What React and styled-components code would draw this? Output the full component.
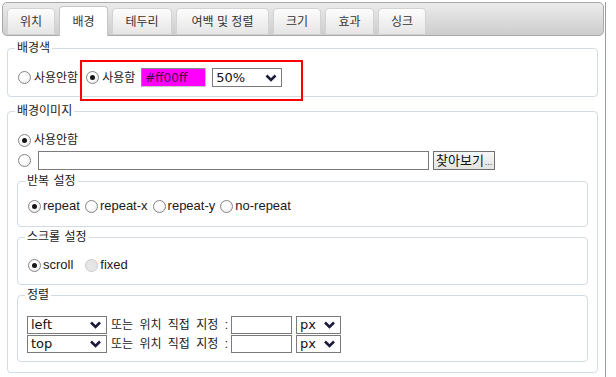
import React from 'react';
import styled, { createGlobalStyle } from 'styled-components';

const Global = createGlobalStyle`
  html, body { margin: 0; padding: 0; background: #fff; }
  body {
    font-family: "Liberation Sans", "Noto Sans CJK KR", sans-serif;
    font-size: 12px;
    line-height: 16px;
    color: #1a1a1a;
  }
  * { box-sizing: border-box; }
`;

const Frame = styled.div`
  box-sizing: content-box;
  width: 605px;
  min-height: 377px;
  border-right: 1px solid #9d9d9d;
`;

const TabBar = styled.div`
  width: 602px;
  height: 34px;
  margin: 2px 0 0 2px;
  padding-left: 4px;
  display: flex;
  align-items: flex-end;
  gap: 4px;
  border: 1px solid #a9a9a9;
  border-radius: 5px;
  background: linear-gradient(#ebebeb, #cdcdcd);
`;

const Tab = styled.div`
  width: ${(p) => p.$w}px;
  height: ${(p) => (p.$active ? 30 : 27)}px;
  margin-bottom: ${(p) => (p.$active ? -1 : 0)}px;
  display: flex;
  align-items: center;
  justify-content: center;
  border: 1px solid ${(p) => (p.$active ? '#c6c6c6' : '#d2d2d2')};
  border-bottom: ${(p) => (p.$active ? 'none' : '1px solid #d2d2d2')};
  border-radius: 4px 4px 0 0;
  background: ${(p) => (p.$active ? '#fff' : 'linear-gradient(#fdfdfd, #e5e5e5)')};
  font-size: 12px;
  color: #333;
  position: relative;
  padding-top: ${(p) => (p.$active ? 0 : 1)}px;
`;

const Content = styled.div`
  padding: 5px 7px 0 7px;
`;

const Group = styled.fieldset`
  margin: ${(p) => p.$mt || 0}px 0 0;
  padding: ${(p) => p.$pt}px 9px ${(p) => p.$pb}px;
  border: 1px solid #d3dbe3;
  border-radius: 4px;
  min-width: 0;
`;

const Legend = styled.legend`
  padding: 0 2px;
  margin-left: -2px;
  font-size: 12px;
  line-height: 15px;
  word-spacing: 1px;
  color: #1a1a1a;
`;

const Row = styled.div`
  display: flex;
  align-items: center;
  height: ${(p) => p.$h || 16}px;
  margin-top: ${(p) => p.$mt || 0}px;
`;

const Option = styled.label`
  display: inline-flex;
  align-items: center;
  gap: ${(p) => (p.$gap != null ? p.$gap : 3)}px;
  margin-left: ${(p) => p.$ml || 0}px;
  margin-right: ${(p) => p.$mr || 0}px;
  white-space: nowrap;
  font-size: ${(p) => p.$fs || 12}px;
  color: #1a1a1a;
`;

const Radio = styled.span`
  width: 13px;
  height: 13px;
  flex: none;
  border-radius: 50%;
  border: 1px solid ${(p) => (p.$disabled ? '#c9c9c9' : '#858585')};
  background: ${(p) =>
    p.$disabled ? '#e6e6e6' : 'radial-gradient(circle at 40% 35%, #ffffff 30%, #e6e6e6)'};
  display: inline-flex;
  align-items: center;
  justify-content: center;
  &::after {
    content: '';
    width: 5px;
    height: 5px;
    border-radius: 50%;
    background: #151515;
    display: ${(p) => (p.$checked ? 'block' : 'none')};
  }
`;

const Highlight = styled.span`
  position: relative;
  display: inline-flex;
  align-items: center;
  gap: 6px;
  &::after {
    content: '';
    position: absolute;
    top: -8px;
    bottom: -14px;
    left: -6px;
    right: -21px;
    border: 2px solid #f00;
    pointer-events: none;
  }
`;

const ColorBox = styled.div`
  width: 65px;
  height: 19px;
  background: #ff00ff;
  border: 1px solid #8a8a8a;
  border-right-color: #c9c9c9;
  border-bottom-color: #c9c9c9;
  padding: 0 0 0 3px;
  display: flex;
  align-items: center;
  font-family: "DejaVu Sans", sans-serif;
  font-size: 12px;
  color: #4a0850;
`;

const SelectBox = styled.div`
  width: ${(p) => p.$w}px;
  height: ${(p) => p.$h}px;
  border: 1px solid #7b7b7b;
  background: #fff;
  display: flex;
  align-items: center;
  justify-content: space-between;
  padding: 0 ${(p) => p.$pr || 5}px 0 3px;
  font-family: "DejaVu Sans", sans-serif;
  font-size: ${(p) => p.$fs || 12}px;
  color: #111;
  flex: none;
`;

const Chevron = ({ w = 11 }) => (
  <svg width={w} height="8" viewBox="0 0 11 8" aria-hidden="true">
    <polyline points="1,1.5 5.5,6 10,1.5" fill="none" stroke="#1b1b3c" strokeWidth="2.6" />
  </svg>
);

const Select = ({ value, w, h, fs, pr, cw }) => (
  <SelectBox $w={w} $h={h} $fs={fs} $pr={pr}>
    <span>{value}</span>
    <Chevron w={cw} />
  </SelectBox>
);

const TextBox = styled.div`
  width: ${(p) => p.$w}px;
  height: ${(p) => p.$h}px;
  border: 1px solid #7b7b7b;
  background: #fff;
  flex: none;
  margin-left: ${(p) => p.$ml || 0}px;
  margin-right: ${(p) => p.$mr || 0}px;
`;

const Button = styled.div`
  height: 19px;
  margin-left: 4px;
  padding: 0 2px;
  border: 1px solid #6f6f6f;
  background: linear-gradient(#f6f6f6, #e3e3e3);
  display: flex;
  align-items: center;
  font-size: 13px;
  color: #111;
  white-space: nowrap;
  & small { font-size: 9px; color: #444; margin-left: 1px; align-self: flex-end; line-height: 14px; }
`;

const Caption = styled.span`
  margin: 0 3px 0 4px;
  white-space: nowrap;
  font-size: 12px;
  word-spacing: 3px;
  color: #1a1a1a;
`;

const TABS = [
  { label: '위치', w: 48 },
  { label: '배경', w: 49, active: true },
  { label: '테두리', w: 60 },
  { label: '여백 및 정렬', w: 93 },
  { label: '크기', w: 48 },
  { label: '효과', w: 49 },
  { label: '싱크', w: 48 },
];

const REPEATS = ['repeat', 'repeat-x', 'repeat-y', 'no-repeat'];

export default function App() {
  return (
    <>
      <Global />
      <Frame>
        <TabBar>
          {TABS.map((t) => (
            <Tab key={t.label} $w={t.w} $active={t.active}>
              {t.label}
            </Tab>
          ))}
        </TabBar>
        <Content>
          <Group $pt={12} $pb={9}>
            <Legend>배경색</Legend>
            <Row $h={19}>
              <Option $ml={1} $mr={8}>
                <Radio />
                사용안함
              </Option>
              <Highlight>
                <Option>
                  <Radio $checked />
                  사용함
                </Option>
                <ColorBox>#ff00ff</ColorBox>
                <Select value="50%" w={70} h={19} fs={13} pr={4} cw={12} />
              </Highlight>
            </Row>
          </Group>

          <Group $mt={7} $pt={13} $pb={10}>
            <Legend>배경이미지</Legend>
            <Row>
              <Option $ml={1}>
                <Radio $checked />
                사용안함
              </Option>
            </Row>
            <Row $h={19} $mt={3}>
              <Option $ml={1}>
                <Radio />
              </Option>
              <TextBox $w={391} $h={19} $ml={7} />
              <Button>
                찾아보기<small>...</small>
              </Button>
            </Row>

            <Group $mt={4} $pt={9} $pb={12}>
              <Legend>반복 설정</Legend>
              <Row>
                {REPEATS.map((r, i) => (
                  <Option key={r} $fs={13} $gap={2} $ml={i === 0 ? 1 : 0} $mr={5}>
                    <Radio $checked={i === 0} />
                    {r}
                  </Option>
                ))}
              </Row>
            </Group>

            <Group $mt={3} $pt={12} $pb={11}>
              <Legend>스크롤 설정</Legend>
              <Row>
                <Option $fs={13} $gap={2} $ml={1} $mr={12}>
                  <Radio $checked />
                  scroll
                </Option>
                <Option $fs={13} $gap={2}>
                  <Radio $disabled />
                  fixed
                </Option>
              </Row>
            </Group>

            <Group $mt={3} $pt={13} $pb={8}>
              <Legend>정렬</Legend>
              {['left', 'top'].map((v, i) => (
                <Row key={v} $h={18} $mt={i ? 1 : 0}>
                  <Select value={v} w={80} h={18} fs={13} pr={5} />
                  <Caption>또는 위치 직접 지정 :</Caption>
                  <TextBox $w={61} $h={18} $mr={4} />
                  <Select value="px" w={45} h={18} fs={13} pr={5} />
                </Row>
              ))}
            </Group>
          </Group>
        </Content>
      </Frame>
    </>
  );
}
